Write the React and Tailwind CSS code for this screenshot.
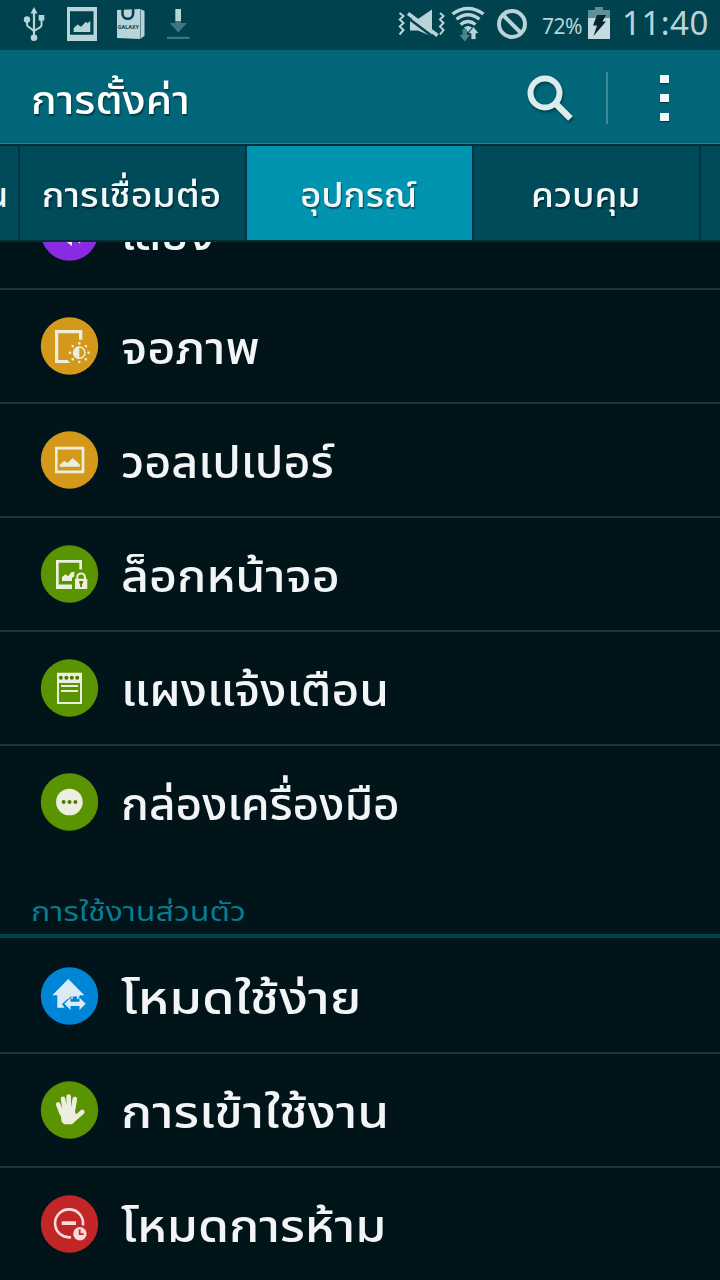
import React from 'react';

const ICON = '#ecefe0';

function UsbIcon() {
  return (
    <svg width="22" height="50" viewBox="23 0 22 50" fill="#b9d4d9" stroke="#b9d4d9">
      <path d="M34 38V12" strokeWidth="2.2" />
      <path d="M34 7l-3.5 6.5h7z" stroke="none" />
      <path d="M27 20v4.5q0 1.500 1.500 2.300L34 31M41.500 18v7q0 1.500-1.500 2.300L34 31" fill="none" strokeWidth="2" />
      <circle cx="27" cy="19.500" r="3.200" stroke="none" />
      <path d="M38.700 15h5.600v5.600h-5.600z" stroke="none" />
      <circle cx="34" cy="37.800" r="3.300" stroke="none" />
    </svg>
  );
}

function GalleryIcon() {
  return (
    <svg width="30" height="50" viewBox="67 0 30 50" fill="#b9d4d9">
      <path fillRule="evenodd" d="M67 7h30v34H67zM70 11.300v23.400h23.500V11.300z" />
      <path d="M73.700 32v-4l4-3.500 3.300 2.300 5-5 1.300 1.500 3-2.300v11z" />
    </svg>
  );
}

function BagIcon() {
  return (
    <svg width="29" height="50" viewBox="116 0 29 50">
      <path d="M117 10l23-1 4.500 2v25L140 39l-23-1z" fill="#b9d4d9" />
      <path d="M140.500 9v30" stroke="#5b8b93" strokeWidth="1" />
      <path d="M122.500 9v4.500a5.300 5.300 0 0 0 10.600 0V9" fill="none" stroke="#00434f" strokeWidth="2.600" />
      <text x="117.800" y="28.800" fontSize="6" fontWeight="700" textLength="21" lengthAdjust="spacingAndGlyphs" fill="#00434f" fontFamily="Roboto, sans-serif">GALAXY</text>
    </svg>
  );
}

function DownloadIcon() {
  return (
    <svg width="23" height="50" viewBox="167 0 23 50" fill="#3f7781">
      <path d="M175.300 9h5.700v12h-5.700z" fill="#b9d4d9" />
      <path d="M175.300 21h5.700v2h6l-8.700 9.500-8.600-9.500h5.600zM167 36.700h22.500V39H167z" />
    </svg>
  );
}

function MuteIcon() {
  return (
    <svg width="48" height="50" viewBox="398 0 48 50" fill="none" stroke="#b9d4d9">
      <path d="M399.500 13l4 3-3.700 3.500 3.700 3.500-3.700 3.500 3.700 3.500-4 4.500M440 13l3.500 3-3.500 3.500 3.500 3.500-3.500 3.500 3.500 3.500-3.500 4.500" strokeWidth="2" />
      <path d="M410 19h8l14-9.500v27L418 30.500h-8z" fill="#b9d4d9" stroke="none" />
      <path d="M406 16.500l30 22.500" stroke="#00434f" strokeWidth="2.500" />
      <path d="M408 13.500l29.500 22" strokeWidth="3.500" />
    </svg>
  );
}

function WifiIcon() {
  return (
    <svg width="35" height="50" viewBox="451 0 35 50" fill="none" stroke="#b9d4d9">
      <path d="M452.500 14q15.500-11 31 0M456.500 19.300q11.500-9 23 0M460.500 24.500q7.500-6 15 0" strokeWidth="3.300" />
      <path d="M464 27.500q4-3 8 0l-4 4.500z" fill="#b9d4d9" stroke="none" />
      <path d="M462.500 29h4.500v6h3l-5.200 6.500-5.300-6.500h3z" fill="#4c828b" stroke="none" />
      <path d="M473.500 26.500l5.500 7h-3V39.500h-5v-6h-3z" fill="#b9d4d9" stroke="#00434f" strokeWidth=".8" />
    </svg>
  );
}

function BlockIcon() {
  return (
    <svg width="30" height="50" viewBox="497 0 30 50" fill="none" stroke="#b9d4d9" strokeWidth="4">
      <circle cx="512" cy="24" r="13" />
      <path d="M503 15l18 18" />
    </svg>
  );
}

function BatteryIcon() {
  return (
    <svg width="22" height="50" viewBox="588 0 22 50">
      <path d="M595 7h8v3h7v9h-22v-9h7z" fill="#5f8f97" />
      <path d="M588 18h22v21h-22z" fill="#c4dbdf" />
      <path d="M597 15h9l-3.500 6.500h3.500L593.500 36l3.500-10.500h-4z" fill="#06262d" />
    </svg>
  );
}

function SoundGlyph() {
  return (
    <>
      <path d="M18 25h6l8-8v27l-8-6h-6z" />
      <path d="M39 41q3-4 3-12" fill="none" stroke={ICON} strokeWidth="1.500" />
    </>
  );
}

function DisplayGlyph() {
  const rays = [0, 45, 90, 135, 180, 225, 270, 315];
  return (
    <>
      <path d="M15 14h27.300v9.700H39v-6.500H18.300V44h9.200l2.500 3H15z" />
      <circle cx="39.300" cy="36.700" r="5.600" fill="none" stroke={ICON} strokeWidth="1.500" />
      <path d="M39.300 30.500a6.200 6.200 0 0 0 0 12.400z" />
      {rays.map(r => (
        <circle key={r} cx="48.600" cy="36.700" r="1.300" transform={`rotate(${r} 39.300 36.700)`} />
      ))}
    </>
  );
}

function WallpaperGlyph() {
  return (
    <>
      <path fillRule="evenodd" d="M15 16.700h29.300v26.600H15zM17.600 19.400v21.200h24.100V19.400z" />
      <path d="M19.700 36.700v-2l4.500-3.700 3.300 2 5.200-5 4 3.500 3.300 3.500v1.700z" />
    </>
  );
}

function LockGlyph() {
  return (
    <>
      <path d="M16 16h26v9.500h-2.700v-6.800H18.700v21.800H32V45H16z" />
      <path d="M22 37v-4l3.500-2.700 2.500 2 3.300-4 3-.5v4.500l-2.300 1.700v3z" />
      <path d="M37.300 35v-1.800a3.800 3.800 0 0 1 7.600 0V35" fill="none" stroke={ICON} strokeWidth="2" />
      <path d="M35 34.700h12.300V45H35z" />
      <path d="M39.300 37h3.600v2.600H42V43h-1.800v-3.400h-.9z" fill="#4b7a00" />
    </>
  );
}

function PanelGlyph() {
  return (
    <>
      <path fillRule="evenodd" d="M17 14.700h25V46H17zM19 25v19h21V25z" />
      <g fill="#4b7a00">
        <circle cx="20.900" cy="19.700" r="2" />
        <circle cx="26.400" cy="19.700" r="2" />
        <circle cx="31.800" cy="19.700" r="2" />
        <circle cx="37.200" cy="19.700" r="2" />
      </g>
      <path d="M21 27h17v2H21zM21 32h17v2H21z" />
    </>
  );
}

function ToolboxGlyph() {
  return (
    <>
      <circle cx="29.400" cy="30" r="13.300" />
      <g fill="#4b7a00">
        <circle cx="23.600" cy="30" r="2" />
        <circle cx="29.500" cy="30" r="2" />
        <circle cx="35.400" cy="30" r="2" />
      </g>
    </>
  );
}

function HomeGlyph() {
  return (
    <g fill="#dcebf3">
      <path d="M28.300 13l16 16.300h-4.600V33H37v-2.500h-4.300V33h-5.200l-5.500 5 2.500 3.700h-7.200V29.300h-5z" />
      <path d="M24.300 37.800l6.200-6v4h9v-4l6.200 6-6.200 6.200v-4h-9v4z" stroke="#0085d6" strokeWidth="1.600" paintOrder="stroke" />
    </g>
  );
}

function HandGlyph() {
  return (
    <>
      <g fill="none" stroke={ICON} strokeWidth="4.600" strokeLinecap="round">
        <path d="M18.200 24.500l3.500 9M23 18.700l2.200 14M28.700 16.500v15M34.800 19l-2.400 14M42.300 32l-8 7" />
      </g>
      <path d="M20 31l14.500-1 1.500 4.500 1.800 2-3.600 6-2.500 1.700h-7.500l-2.500-2.500z" />
    </>
  );
}

function BlockModeGlyph() {
  return (
    <g fill="#f6dcdc" stroke="#f6dcdc" strokeWidth="0">
      <path d="M42.900 31.500A14 14 0 1 0 31 43.200" fill="none" strokeWidth="2.600" />
      <path d="M21.700 27.300H36V31H21.700z" />
      <circle cx="39.900" cy="39.700" r="6.700" />
      <path d="M39.700 35.500v4.700h4" fill="none" stroke="#c22627" strokeWidth="1.800" />
    </g>
  );
}

const deviceRows = [
  { label: 'จอภาพ', color: '#d4981b', Glyph: DisplayGlyph, stretch: 'scale-x-[1.105]' },
  { label: 'วอลเปเปอร์', color: '#d4981b', Glyph: WallpaperGlyph, stretch: 'scale-x-[1.06]' },
  { label: 'ล็อกหน้าจอ', color: '#5a9400', Glyph: LockGlyph, stretch: 'scale-x-[1.1]' },
  { label: 'แผงแจ้งเตือน', color: '#5a9400', Glyph: PanelGlyph, stretch: 'scale-x-[1.09]' },
  { label: 'กล่องเครื่องมือ', color: '#5a9400', Glyph: ToolboxGlyph, stretch: 'scale-x-[1.045]', last: true },
];

const personalRows = [
  { label: 'โหมดใช้ง่าย', color: '#0085d6', Glyph: HomeGlyph, stretch: 'scale-x-[1.195]' },
  { label: 'การเข้าใช้งาน', color: '#5a9400', Glyph: HandGlyph, stretch: 'scale-x-[1.168]' },
  { label: 'โหมดการห้าม', color: '#c22627', Glyph: BlockModeGlyph, stretch: 'scale-x-[1.135]', last: true },
];

function SettingRow({ label, color, Glyph, stretch, last }) {
  return (
    <div
      className={`h-[114px] shrink-0 flex items-center pl-10 border-b-2 ${
        last ? 'border-transparent' : 'border-[#243338]'
      }`}
    >
      <svg width="60" height="60" viewBox="0 0 60 60" fill={ICON} className="shrink-0">
        <circle cx="29.500" cy="30" r="28.700" fill={color} />
        <Glyph />
      </svg>
      <span
        className={`ml-[21px] pt-2.5 inline-block origin-left text-[44px] font-medium leading-none whitespace-nowrap text-[#f2f4f5] ${stretch}`}
      >
        {label}
      </span>
    </div>
  );
}

function Tab({ label, stretch, active }) {
  return (
    <div
      className={`w-[227px] shrink-0 flex items-center justify-center border-r-2 border-[#003640] pr-0.5 text-[34px] leading-none whitespace-nowrap text-[#f2f8f9] [text-shadow:1px_2px_1px_rgba(0,0,0,0.4)] ${
        active ? 'bg-[#0094b0]' : 'bg-[#004b5a]'
      }`}
    >
      <span className={`pt-2 inline-block font-medium ${stretch}`}>{label}</span>
    </div>
  );
}

function App() {
  return (
    <div className="w-[720px] h-[1280px] flex flex-col overflow-hidden bg-[#00141a] font-['Noto_Sans_Thai','Noto_Sans',sans-serif]">
      {/* StatusBar */}
      <div className="h-[50px] shrink-0 flex items-center bg-[#00434f] pl-[23px] text-[#b9d4d9]">
        <UsbIcon />
        <div className="ml-[22px]"><GalleryIcon /></div>
        <div className="ml-[19px]"><BagIcon /></div>
        <div className="ml-[22px]"><DownloadIcon /></div>
        <div className="ml-[208px]"><MuteIcon /></div>
        <div className="ml-[5px]"><WifiIcon /></div>
        <div className="ml-[11px]"><BlockIcon /></div>
        <span className="ml-[15px] pt-1 w-[46px] text-[21px] tracking-[-0.5px] leading-none">72%</span>
        <BatteryIcon />
        <span className="ml-[12px] pt-px text-[33px] tracking-[0.5px] leading-none">11:40</span>
      </div>

      {/* ActionBar */}
      <div className="h-[94px] shrink-0 flex items-center bg-[#006678] border-b border-[#2b7f8e] pl-[31px] pt-0.5">
        <h1 className="pt-2 inline-block origin-left scale-x-[1.06] text-[40px] font-medium leading-none whitespace-nowrap text-white [text-shadow:1px_2px_1px_rgba(0,0,0,0.4)]">
          การตั้งค่า
        </h1>
        <svg width="52" height="52" viewBox="0 0 52 52" fill="none" stroke="#dcebee" className="ml-auto drop-shadow-[1px_2px_1px_rgba(0,0,0,0.4)]">
          <circle cx="20" cy="21" r="14.500" strokeWidth="6" />
          <path d="M30 31l15.500 15.500" strokeWidth="6.500" />
        </svg>
        <div className="ml-[29px] w-0.5 h-[52px] bg-[#3f8b98]" />
        <div className="ml-[52px] mr-[51px] flex flex-col gap-[11px]">
          <i className="h-2 w-[9px] bg-[#f2f8f9] shadow-[0_1px_1px_rgba(0,0,0,0.4)]" />
          <i className="h-2 w-[9px] bg-[#f2f8f9] shadow-[0_1px_1px_rgba(0,0,0,0.4)]" />
          <i className="h-2 w-[9px] bg-[#f2f8f9] shadow-[0_1px_1px_rgba(0,0,0,0.4)]" />
        </div>
      </div>

      {/* Tabs */}
      <div className="h-[98px] shrink-0 flex border-y-2 border-[#002f38] overflow-hidden">
        <div className="w-5 shrink-0 flex items-center justify-end bg-[#004b5a] border-r-2 border-[#003640] text-[34px] font-medium leading-none text-[#f2f8f9] overflow-hidden">
          <span className="pt-2 mr-[10px]">น</span>
        </div>
        <Tab label="การเชื่อมต่อ" stretch="scale-x-[1.1]" />
        <Tab label="อุปกรณ์" stretch="scale-x-[1.07]" active />
        <Tab label="ควบคุม" stretch="scale-x-[1.08]" />
        <div className="flex-1 bg-[#004b5a]" />
      </div>

      {/* SettingsList */}
      <div className="flex-1 min-h-0 overflow-hidden flex flex-col">
        <div className="-mt-[66px] shrink-0">
          <SettingRow label="เสียง" color="#8a2be2" Glyph={SoundGlyph} stretch="scale-x-[1.04]" />
        </div>
        {deviceRows.map(row => (
          <SettingRow key={row.label} {...row} />
        ))}
        <div className="h-20 shrink-0 pb-0.5">
          <div className="h-[78px] flex items-end pl-[31px] pb-[8px] border-b-4 border-[#00434f]">
            <h2 className="inline-block origin-left scale-x-[1.19] text-[27px] leading-none whitespace-nowrap text-[#087d92]">การใช้งานส่วนตัว</h2>
          </div>
        </div>
        {personalRows.map(row => (
          <SettingRow key={row.label} {...row} />
        ))}
      </div>
    </div>
  );
}

export default App;
